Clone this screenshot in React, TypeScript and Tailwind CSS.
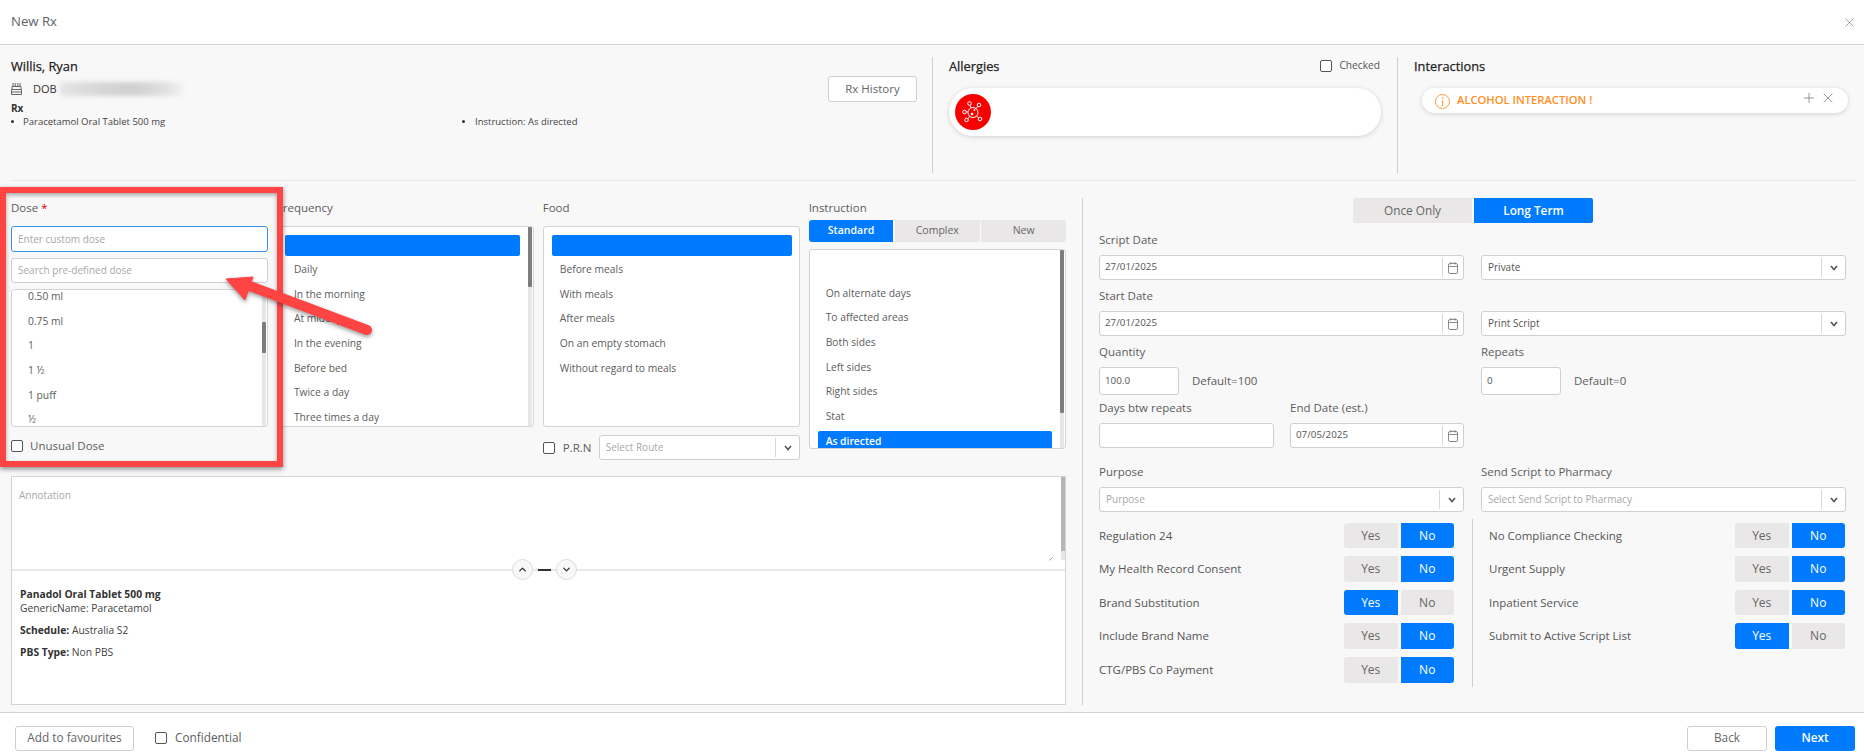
import React from "react";
import { X, Plus, ChevronDown, ChevronUp } from "lucide-react";

const BLUE = "bg-[#007bff]";

function Check({ className = "" }: { className?: string }) {
  return <span className={`inline-block w-[12px] h-[12px] rounded-[2px] border border-[#555] bg-white shrink-0 ${className}`} />;
}

function Cal() {
  return (
    <svg width="10" height="12" viewBox="0 0 10 12" fill="none" stroke="#8a8a8a" strokeWidth="1" className="shrink-0">
      <rect x="0.5" y="1.5" width="9" height="10" rx="1.5" />
      <path d="M0.5 4.5H9.5M3 0V2.5M7 0V2.5" />
    </svg>
  );
}

function Chevron() {
  return (
    <svg width="8" height="6" viewBox="0 0 8 6" fill="none" stroke="#555" strokeWidth="1.6" className="shrink-0">
      <path d="M1 1L4 4.5L7 1" />
    </svg>
  );
}

function DateField({ value, className }: { value: string; className: string }) {
  return (
    <div className={`flex items-center bg-white border border-[#cfcfcf] rounded-[3px] ${className}`}>
      <span className="flex-1 pl-[5px] text-[9.8px] text-[#555]">{value}</span>
      <span className="flex items-center justify-center w-[21px] h-[19px] border-l border-[#d8d8d8]"><Cal /></span>
    </div>
  );
}

function SelectField({ value, placeholder, className }: { value: string; placeholder?: boolean; className: string }) {
  return (
    <div className={`flex items-center bg-white border border-[#cfcfcf] rounded-[3px] ${className}`}>
      <span className={`flex-1 pl-[6px] text-[10px] whitespace-nowrap ${placeholder ? "text-[#a8a8a8]" : "text-[#555]"}`}>{value}</span>
      <span className="flex items-center justify-center w-[24px] h-[19px] border-l border-[#d8d8d8]"><Chevron /></span>
    </div>
  );
}

function Item({ children }: { children?: React.ReactNode }) {
  return <div className="h-[24.7px] leading-[24.7px] text-[10.3px] text-[#5c5c5c] whitespace-nowrap">{children}</div>;
}

function Scrollbar({ top, height, trackClass = "right-[1px]" }: { top: number; height: number; trackClass?: string }) {
  return (
    <div className={`absolute top-0 bottom-0 w-[4px] bg-[#e6e6e6] ${trackClass}`}>
      <div className="absolute left-0 w-full bg-[#7d7d7d] rounded-[1px]" style={{ top, height }} />
    </div>
  );
}

function Toggle({ value }: { value: "yes" | "no" }) {
  const on = `${BLUE} text-white`;
  const off = "bg-[#e9e7e7] text-[#666]";
  return (
    <div className="flex gap-[3px] w-[110px] h-full text-[12px]">
      <div className={`flex-1 flex items-center justify-center rounded-l-[3px] ${value === "yes" ? on : off}`}>Yes</div>
      <div className={`flex-1 flex items-center justify-center rounded-r-[3px] ${value === "no" ? on : off}`}>No</div>
    </div>
  );
}

function ToggleRow({ label, value, h = "h-[25px]", mb = "mb-[8px]" }: { label: string; value: "yes" | "no"; h?: string; mb?: string }) {
  return (
    <div className={`flex items-center justify-between ${h} ${mb}`}>
      <span className="text-[11.5px] text-[#555] whitespace-nowrap">{label}</span>
      <Toggle value={value} />
    </div>
  );
}

function Label({ children, className = "" }: { children: React.ReactNode; className?: string }) {
  return <div className={`text-[11.5px] leading-[16px] text-[#5c5c5c] ${className}`}>{children}</div>;
}

export default function App() {
  return (
    <div className="relative w-[1864px] h-[753px] overflow-hidden bg-white flex flex-col font-['Open_Sans','Noto_Sans',sans-serif]">
      {/* header */}
      <header className="h-[45px] shrink-0 flex items-center justify-between pl-[11px] pr-[7px] border-b border-[#d4d4d4] text-[13.2px] text-[#5f6368]">
        <span>New Rx</span>
        <X size={15} strokeWidth={1.1} className="text-[#777]" />
      </header>

      {/* body */}
      <main className="flex-1 min-h-0 bg-[#f8f8f8] flex flex-col px-[11px] border-b border-[#d4d4d4]">
        {/* patient band */}
        <section className="h-[136px] shrink-0 flex border-b border-[#e8e8e8] mr-[-2px]">
          <div className="w-[921px] shrink-0 pt-[12px] relative text-[#333]">
            <div className="text-[12.8px] leading-[18px] font-medium text-[#222] [-webkit-text-stroke:0.25px_#222]">Willis, Ryan</div>
            <div className="flex items-center h-[18px] mt-[5px]">
              <svg width="11" height="12" viewBox="0 0 11 12" fill="none" stroke="#666" strokeWidth="1">
                <path d="M2 0v3M4.2 0v3M6.8 0v3M9 0v3M1 3.5h9v3H1zM.5 6.5h10v5H.5zM.5 9h10" />
              </svg>
              <span className="ml-[11px] text-[11px] text-[#333]">DOB</span>
              <div className="ml-[3px] w-[123px] h-[14px] bg-[linear-gradient(90deg,#e4e4e4,#d6d6d6_35%,#d0d0d0_60%,#e0e0e0_85%,#f2f2f2)] blur-[2px]" />
            </div>
            <div className="mt-[3px] text-[10px] leading-[14px] font-bold text-[#333]">Rx</div>
            <div className="flex text-[9.5px] leading-[13px] text-[#444]">
              <div className="w-[451px] flex items-center"><span className="w-[3px] h-[3px] rounded-full bg-[#333] mr-[9px]" />Paracetamol Oral Tablet 500 mg</div>
              <div className="flex items-center"><span className="w-[3px] h-[3px] rounded-full bg-[#333] mr-[10px]" />Instruction: As directed</div>
            </div>
            <button className="absolute left-[817px] top-[31px] w-[89px] h-[26px] bg-white border border-[#cfcfcf] rounded-[3px] text-[11.5px] text-[#666]">Rx History</button>
          </div>
          <div className="w-[1px] h-[116px] mt-[12px] bg-[#cfcfcf] shrink-0" />
          <div className="w-[464px] shrink-0 pl-[16px] pr-[16px] pt-[12px]">
            <div className="flex items-center justify-between h-[18px]">
              <span className="text-[12.8px] leading-[18px] font-medium text-[#222] [-webkit-text-stroke:0.25px_#222]">Allergies</span>
              <span className="flex items-center gap-[7px] pr-[1px] text-[10.2px] text-[#555]"><Check />Checked</span>
            </div>
            <div className="mt-[13px] w-[432px] h-[48px] rounded-full bg-white shadow-[0_1px_5px_rgba(0,0,0,0.16)] flex items-center pl-[6px]">
              <span className="w-[36px] h-[36px] rounded-full bg-[#f90000] flex items-center justify-center">
                <svg width="22" height="22" viewBox="0 0 22 22" fill="none" stroke="#fff" strokeWidth="1">
                  <circle cx="11" cy="11.5" r="5" />
                  <circle cx="7.5" cy="2.5" r="1.8" />
                  <circle cx="17" cy="4" r="1.8" />
                  <circle cx="2.5" cy="11" r="1.8" />
                  <circle cx="4.5" cy="19" r="1.8" />
                  <circle cx="18" cy="18" r="1.8" />
                  <path d="M8 4.2l1.2 2.8M15.8 5.3l-1.8 2.2M4.3 11H6M5.8 17.8l2-2.5M16.7 17l-2-2" />
                  <circle cx="10" cy="13" r="1.3" fill="#fff" stroke="none" />
                  <circle cx="12.5" cy="9" r="0.9" fill="#fff" stroke="none" />
                </svg>
              </span>
            </div>
          </div>
          <div className="w-[1px] h-[116px] mt-[12px] bg-[#cfcfcf] shrink-0" />
          <div className="flex-1 pl-[16px] pt-[12px]">
            <div className="text-[12.8px] leading-[18px] font-medium text-[#222] [-webkit-text-stroke:0.25px_#222]">Interactions</div>
            <div className="mt-[13px] ml-[8px] mr-[7px] h-[25px] rounded-full bg-white shadow-[0_1px_5px_rgba(0,0,0,0.16)] flex items-center pl-[13px] pr-[12px]">
              <svg width="15" height="15" viewBox="0 0 15 15" fill="none" stroke="#ff9a3c" strokeWidth="1" className="shrink-0 mt-[1px]">
                <circle cx="7.5" cy="7.5" r="7" />
                <path d="M7.5 6.5v5.5M7.5 3.2v1.6" strokeWidth="1.2" />
              </svg>
              <span className="ml-[7px] -mt-[1px] text-[11.2px] font-semibold text-[#ff8f1f]">ALCOHOL INTERACTION !</span>
              <span className="ml-auto flex items-center gap-[3px] -mt-[5px] text-[#777]">
                <Plus size={16} strokeWidth={1.1} />
                <X size={16} strokeWidth={1.1} />
              </span>
            </div>
          </div>
        </section>

        {/* workspace */}
        <section className="flex-1 min-h-0 flex">
          <div className="w-[1055px] shrink-0 flex flex-col">
            <div className="grid grid-cols-4 gap-x-[8.5px] h-[295px] pt-[19px] shrink-0">
              {/* dose */}
              <div className="flex flex-col">
                <Label className="mb-[10px]">Dose <span className="text-[#e00000]">*</span></Label>
                <div className="h-[26px] flex items-center pl-[6px] bg-white border border-[#3b8fe8] rounded-[3px] text-[10px] text-[#a8a8a8]">Enter custom dose</div>
                <div className="h-[25px] mt-[6px] flex items-center pl-[6px] bg-white border border-[#cfcfcf] rounded-[3px] text-[10px] text-[#a8a8a8]">Search pre-defined dose</div>
                <div className="relative h-[138px] mt-[6px] bg-white border border-[#d4d4d4] rounded-[3px] overflow-hidden pl-[16px]">
                  <div className="-mt-[6px]">
                    {["0.50 ml", "0.75 ml", "1", "1 ½", "1 puff", "½"].map((t) => <Item key={t}>{t}</Item>)}
                  </div>
                  <Scrollbar top={32} height={31} />
                </div>
                <div className="flex items-center mt-[12px] h-[13px] gap-[7px] text-[11.5px] text-[#5c5c5c]"><Check />Unusual Dose</div>
              </div>

              {/* frequency */}
              <div className="flex flex-col">
                <Label className="mb-[10px]">Frequency</Label>
                <div className="relative h-[201px] bg-white border border-[#d4d4d4] rounded-[3px] overflow-hidden pt-[8px] pl-[7px] pr-[13px]">
                  <div className={`h-[21px] rounded-[2px] mb-[1px] ${BLUE}`} />
                  <div className="pl-[9px]">
                    {["Daily", "In the morning", "At midday", "In the evening", "Before bed", "Twice a day", "Three times a day"].map((t) => <Item key={t}>{t}</Item>)}
                  </div>
                  <Scrollbar top={0} height={60} />
                </div>
              </div>

              {/* food */}
              <div className="flex flex-col">
                <Label className="mb-[10px]">Food</Label>
                <div className="h-[201px] bg-white border border-[#d4d4d4] rounded-[3px] overflow-hidden pt-[8px] pl-[8px] pr-[7px]">
                  <div className={`h-[21px] rounded-[2px] mb-[1px] ${BLUE}`} />
                  <div className="pl-[8px]">
                    {["Before meals", "With meals", "After meals", "On an empty stomach", "Without regard to meals"].map((t) => <Item key={t}>{t}</Item>)}
                  </div>
                </div>
                <div className="flex items-center mt-[8px] h-[25px]">
                  <Check />
                  <span className="ml-[8px] w-[36px] text-[11.5px] text-[#5c5c5c]">P.R.N</span>
                  <SelectField value="Select Route" placeholder className="flex-1 h-[25px]" />
                </div>
              </div>

              {/* instruction */}
              <div className="flex flex-col">
                <Label className="mb-[-4px]">Instruction</Label>
                <div className="flex gap-[1.5px] h-[22px] mt-[8px] text-[10.5px]">
                  <div className={`flex-1 flex items-center justify-center rounded-l-[3px] text-white font-semibold ${BLUE}`}>Standard</div>
                  <div className="flex-1 flex items-center justify-center bg-[#e9e7e7] text-[#666]">Complex</div>
                  <div className="flex-1 flex items-center justify-center rounded-r-[3px] bg-[#e9e7e7] text-[#666]">New</div>
                </div>
                <div className="relative h-[200px] mt-[7px] bg-white border border-[#d4d4d4] rounded-[3px] overflow-hidden pt-[30.5px] pl-[8px] pr-[13px]">
                  <div className="pl-[8px]">
                    {["On alternate days", "To affected areas", "Both sides", "Left sides", "Right sides", "Stat"].map((t) => <Item key={t}>{t}</Item>)}
                  </div>
                  <div className={`h-[21px] mt-[2px] pl-[8px] rounded-t-[2px] text-[10.3px] leading-[20px] font-semibold text-white ${BLUE}`}>As directed</div>
                  <Scrollbar top={0} height={163} />
                </div>
              </div>
            </div>

            {/* annotation */}
            <div className="h-[229px] shrink-0 bg-white border border-[#d4d4d4] flex flex-col">
              <div className="relative h-[94px] shrink-0 pl-[7px] pt-[11px] text-[10px] leading-[14px] text-[#a8a8a8] border-b-[2px] border-[#e8e8e8]">
                Annotation
                <div className="absolute right-0 top-0 w-[4px] h-[83px] bg-[#e6e6e6]"><div className="w-full h-[74px] bg-[#b5b5b5]" /></div>
                <svg className="absolute left-[1037px] top-[80px]" width="4" height="4" viewBox="0 0 4 4" fill="none" stroke="#666" strokeWidth="0.7"><path d="M0.5 3.5L3.5 0.5" /></svg>
                <div className="absolute left-[500px] top-[82px] flex items-center gap-[5px]">
                  <span className="w-[21px] h-[21px] rounded-full bg-[#f8f8f8] border border-[#dcdcdc] flex items-center justify-center text-[#333]"><ChevronUp size={11} strokeWidth={3} /></span>
                  <span className="w-[13px] h-[2px] bg-[#333]" />
                  <span className="w-[21px] h-[21px] rounded-full bg-[#f8f8f8] border border-[#dcdcdc] flex items-center justify-center text-[#333]"><ChevronDown size={11} strokeWidth={3} /></span>
                </div>
              </div>
              <div className="pl-[8px] pt-[16px] text-[10.3px] leading-[14px] text-[#444]">
                <div className="font-bold text-[#333]">Panadol Oral Tablet 500 mg</div>
                <div>GenericName: Paracetamol</div>
                <div className="mt-[8px]"><b className="text-[#333]">Schedule:</b> Australia S2</div>
                <div className="mt-[8px]"><b className="text-[#333]">PBS Type:</b> Non PBS</div>
              </div>
            </div>
          </div>

          {/* right panel */}
          <div className="w-[1px] h-[507px] ml-[16px] mt-[17px] bg-[#cfcfcf] shrink-0" />
          <div className="w-[747px] ml-[16px] pt-[17px] shrink-0">
            <div className="flex justify-center gap-[2px] h-[25px] pl-[1px] text-[11.8px]">
              <div className="w-[119px] flex items-center justify-center rounded-l-[2px] bg-[#e9e7e7] text-[#666]">Once Only</div>
              <div className={`w-[119px] flex items-center justify-center rounded-r-[2px] font-semibold text-white ${BLUE}`}>Long Term</div>
            </div>

            <div className="grid grid-cols-[365px_365px] gap-x-[17px]">
              <div>
                <Label className="mt-[9px] mb-[7px]">Script Date</Label>
                <DateField value="27/01/2025" className="h-[25px]" />
              </div>
              <div className="pt-[32px]"><SelectField value="Private" className="h-[25px]" /></div>

              <div>
                <Label className="mt-[8px] mb-[7px]">Start Date</Label>
                <DateField value="27/01/2025" className="h-[25px]" />
              </div>
              <div className="pt-[31px]"><SelectField value="Print Script" className="h-[25px]" /></div>

              <div>
                <Label className="mt-[8px] mb-[7px]">Quantity</Label>
                <div className="flex items-center">
                  <div className="w-[80px] h-[28px] flex items-center pl-[5px] bg-white border border-[#cfcfcf] rounded-[3px] text-[9.8px] text-[#555]">100.0</div>
                  <span className="ml-[13px] text-[11.5px] text-[#5c5c5c]">Default=100</span>
                </div>
              </div>
              <div>
                <Label className="mt-[8px] mb-[7px]">Repeats</Label>
                <div className="flex items-center">
                  <div className="w-[80px] h-[28px] flex items-center pl-[5px] bg-white border border-[#cfcfcf] rounded-[3px] text-[9.8px] text-[#555]">0</div>
                  <span className="ml-[13px] text-[11.5px] text-[#5c5c5c]">Default=0</span>
                </div>
              </div>

              <div className="grid grid-cols-[175px_174px] gap-x-[16px]">
                <div>
                  <Label className="mt-[5px] mb-[7px]">Days btw repeats</Label>
                  <div className="h-[25px] bg-white border border-[#cfcfcf] rounded-[3px]" />
                </div>
                <div>
                  <Label className="mt-[5px] mb-[7px]">End Date (est.)</Label>
                  <DateField value="07/05/2025" className="h-[25px]" />
                </div>
              </div>
              <div />

              <div>
                <Label className="mt-[16px] mb-[7px]">Purpose</Label>
                <SelectField value="Purpose" placeholder className="h-[25px]" />
              </div>
              <div>
                <Label className="mt-[16px] mb-[7px]">Send Script to Pharmacy</Label>
                <SelectField value="Select Send Script to Pharmacy" placeholder className="h-[25px]" />
              </div>
            </div>

            <div className="flex mt-[7px]">
              <div className="w-[355px] shrink-0 pt-[4px]">
                <ToggleRow label="Regulation 24" value="no" />
                <ToggleRow label="My Health Record Consent" value="no" h="h-[26px]" />
                <ToggleRow label="Brand Substitution" value="yes" />
                <ToggleRow label="Include Brand Name" value="no" h="h-[26px]" />
                <ToggleRow label="CTG/PBS Co Payment" value="no" h="h-[26px]" mb="mb-0" />
              </div>
              <div className="w-[1px] h-[168px] ml-[18px] bg-[#cfcfcf] shrink-0" />
              <div className="w-[356px] shrink-0 ml-[16px] pt-[4px]">
                <ToggleRow label="No Compliance Checking" value="no" />
                <ToggleRow label="Urgent Supply" value="no" h="h-[26px]" />
                <ToggleRow label="Inpatient Service" value="no" />
                <ToggleRow label="Submit to Active Script List" value="yes" h="h-[26px]" mb="mb-0" />
              </div>
            </div>
          </div>
        </section>
      </main>

      {/* footer */}
      <footer className="h-[40px] shrink-0 flex items-center pl-[15px] pr-[9px] pt-[10px] text-[11.8px]">
        <button className="w-[119px] h-[25px] bg-white border border-[#cfcfcf] rounded-[3px] text-[#666]">Add to favourites</button>
        <span className="flex items-center gap-[8px] ml-[21px] text-[#5c5c5c]"><Check />Confidential</span>
        <button className="ml-auto w-[80px] h-[25px] bg-white border border-[#cfcfcf] rounded-[3px] text-[#666]">Back</button>
        <button className={`ml-[8px] w-[80px] h-[25px] rounded-[3px] font-semibold text-white ${BLUE}`}>Next</button>
      </footer>

      {/* annotation overlay: red box and arrow */}
      <div className="absolute left-0 top-[187px] w-[283px] h-[280px] border-[6px] border-[#ff4444] shadow-[0_2px_5px_rgba(0,0,0,0.45),inset_0_2px_4px_rgba(0,0,0,0.35)] pointer-events-none" />
      <svg className="absolute left-[215px] top-[268px] pointer-events-none" width="170" height="80" viewBox="0 0 170 80" fill="none">
        <g style={{ filter: "drop-shadow(0 2px 2px rgba(0,0,0,0.4))" }}>
          <path d="M152 62L32 17" stroke="#ff4444" strokeWidth="10" strokeLinecap="round" />
          <path d="M11 11L38 9L30 32Z" fill="#ff4444" stroke="#ff4444" strokeWidth="1" strokeLinejoin="round" />
        </g>
      </svg>
    </div>
  );
}
